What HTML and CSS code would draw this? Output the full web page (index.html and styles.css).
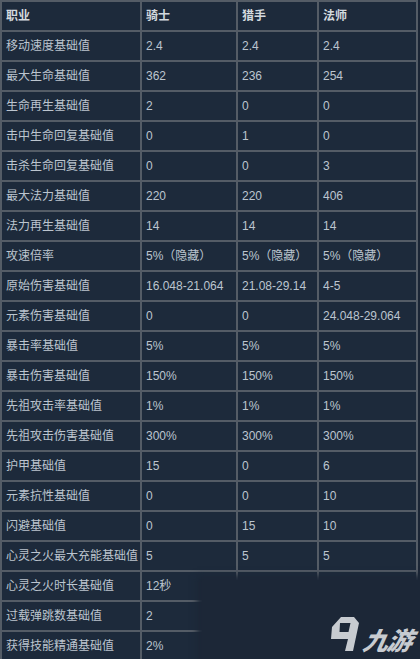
FILE: index.html
```html
<!DOCTYPE html>
<html lang="zh">
<head>
<meta charset="utf-8">
<link rel="stylesheet" href="styles.css">
</head>
<body>
<div class="page">
<table class="stats">
<colgroup><col class="c1"><col class="c2"><col class="c3"><col class="c4"></colgroup>
<tr class="head"><td>职业</td><td>骑士</td><td>猎手</td><td>法师</td></tr>
<tr><td>移动速度基础值</td><td>2.4</td><td>2.4</td><td>2.4</td></tr>
<tr><td>最大生命基础值</td><td>362</td><td>236</td><td>254</td></tr>
<tr><td>生命再生基础值</td><td>2</td><td>0</td><td>0</td></tr>
<tr><td>击中生命回复基础值</td><td>0</td><td>1</td><td>0</td></tr>
<tr><td>击杀生命回复基础值</td><td>0</td><td>0</td><td>3</td></tr>
<tr><td>最大法力基础值</td><td>220</td><td>220</td><td>406</td></tr>
<tr><td>法力再生基础值</td><td>14</td><td>14</td><td>14</td></tr>
<tr><td>攻速倍率</td><td>5%（隐藏）</td><td>5%（隐藏）</td><td>5%（隐藏）</td></tr>
<tr><td>原始伤害基础值</td><td>16.048-21.064</td><td>21.08-29.14</td><td>4-5</td></tr>
<tr><td>元素伤害基础值</td><td>0</td><td>0</td><td>24.048-29.064</td></tr>
<tr><td>暴击率基础值</td><td>5%</td><td>5%</td><td>5%</td></tr>
<tr><td>暴击伤害基础值</td><td>150%</td><td>150%</td><td>150%</td></tr>
<tr><td>先祖攻击率基础值</td><td>1%</td><td>1%</td><td>1%</td></tr>
<tr><td>先祖攻击伤害基础值</td><td>300%</td><td>300%</td><td>300%</td></tr>
<tr><td>护甲基础值</td><td>15</td><td>0</td><td>6</td></tr>
<tr><td>元素抗性基础值</td><td>0</td><td>0</td><td>10</td></tr>
<tr><td>闪避基础值</td><td>0</td><td>15</td><td>10</td></tr>
<tr><td>心灵之火最大充能基础值</td><td>5</td><td>5</td><td>5</td></tr>
<tr><td>心灵之火时长基础值</td><td>12秒</td><td></td><td></td></tr>
<tr><td>过载弹跳数基础值</td><td>2</td><td></td><td></td></tr>
<tr><td>获得技能精通基础值</td><td>2%</td><td></td><td></td></tr>
</table>
<div class="veil"></div>
<svg class="mark-icon" viewBox="0 0 34 40" width="34" height="40" aria-hidden="true">
<path fill="#c7cbd0" fill-rule="evenodd" d="M13,3 H26 L31,9 L25,37 H17 L20,25 H3 L4,13 Z M12,9 L11.5,18 H20.5 L22.5,9 Z"/>
</svg>
<span class="mark-text">九游</span>
</div>
</body>
</html>
```
FILE: styles.css
```css
html, body {
  margin: 0;
  padding: 0;
  background: #1b2636;
}
.page {
  position: relative;
  width: 420px;
  height: 659px;
  overflow: hidden;
  background: #1b2636;
}
.stats {
  border-collapse: collapse;
  table-layout: fixed;
  width: 418px;
  font-family: "Liberation Sans", Arial, "Noto Sans CJK SC", sans-serif;
  font-size: 12px;
  color: #bcc5cf;
}
.c1 { width: 140px; }
.c2 { width: 96px; }
.c3 { width: 81px; }
.c4 { width: 99px; }
.stats td {
  height: 28px;
  padding: 0 0 0 4px;
  border: 2px solid #545c66;
  background: #1d2a3b;
  white-space: nowrap;
  overflow: hidden;
  vertical-align: middle;
  line-height: 28px;
}
.stats tr.head td {
  color: #d3d9df;
  font-weight: bold;
}
.veil {
  position: absolute;
  left: 202px;
  top: 580px;
  right: -10px;
  bottom: -10px;
  background: #1c2737;
  box-shadow: 0 0 6px 5px #1c2737;
}
.mark-icon {
  position: absolute;
  left: 328px;
  top: 614px;
  display: block;
}
.mark-text {
  position: absolute;
  left: 364px;
  top: 624px;
  font-family: "Noto Sans CJK SC", sans-serif;
  font-weight: 900;
  font-style: italic;
  font-size: 25px;
  line-height: 30px;
  color: #c7cbd0;
  letter-spacing: -1px;
  transform: skewX(-12deg);
  display: inline-block;
}
```
